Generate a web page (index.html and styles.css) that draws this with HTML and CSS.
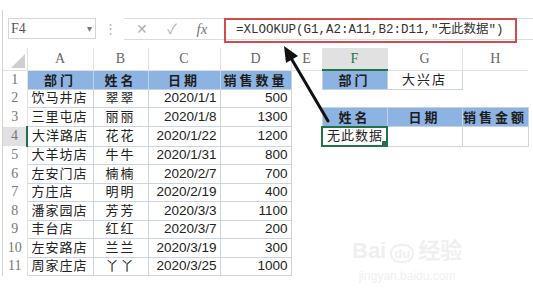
FILE: index.html
```html
<!DOCTYPE html>
<html lang="zh">
<head>
  <meta charset="UTF-8" />
  <title>XLOOKUP</title>
  <link rel="stylesheet" href="styles.css">
</head>
<body>
  <div class="app">
    <div class="fbar">
      <div class="namebox"><span>F4</span><span class="drop">&#9662;</span></div>
      <div class="grip">&#8942;</div>
      <div class="fbox">
        <span class="btn">&#10005;</span>
        <span class="btn">&#10003;</span>
        <span class="btn fx">fx</span>
        <div class="formula">=XLOOKUP(G1,A2:A11,B2:D11,"无此数据")</div>
      </div>
    </div>

    <table class="sheet">
      <colgroup>
        <col class="c-rh"><col class="c-a"><col class="c-b"><col class="c-c"><col class="c-d">
        <col class="c-e"><col class="c-f"><col class="c-g"><col class="c-h">
      </colgroup>
      <tr class="colhead">
        <th class="corner"><span class="tri"></span></th>
        <th>A</th><th>B</th><th>C</th><th>D</th><th>E</th><th class="sel">F</th><th>G</th><th>H</th>
      </tr>
      <tr>
        <td class="rh">1</td>
        <td class="hd">部门</td><td class="hd">姓名</td><td class="hd">日期</td><td class="hd">销售数量</td>
        <td></td><td class="hd">部门</td><td class="bx ctr">大兴店</td><td></td>
      </tr>
      <tr>
        <td class="rh">2</td>
        <td class="bx">饮马井店</td><td class="bx ctr">翠翠</td><td class="bx num">2020/1/1</td><td class="bx num">500</td>
        <td></td><td></td><td></td><td></td>
      </tr>
      <tr>
        <td class="rh">3</td>
        <td class="bx">三里屯店</td><td class="bx ctr">丽丽</td><td class="bx num">2020/1/8</td><td class="bx num">1300</td>
        <td></td><td class="hd">姓名</td><td class="hd">日期</td><td class="hd">销售金额</td>
      </tr>
      <tr>
        <td class="rh rsel">4</td>
        <td class="bx">大洋路店</td><td class="bx ctr">花花</td><td class="bx num">2020/1/22</td><td class="bx num">1200</td>
        <td></td><td class="bx ctr active">无此数据<span class="handle"></span></td><td class="bx"></td><td class="bx"></td>
      </tr>
      <tr>
        <td class="rh">5</td>
        <td class="bx">大羊坊店</td><td class="bx ctr">牛牛</td><td class="bx num">2020/1/31</td><td class="bx num">800</td>
        <td></td><td></td><td></td><td></td>
      </tr>
      <tr>
        <td class="rh">6</td>
        <td class="bx">左安门店</td><td class="bx ctr">楠楠</td><td class="bx num">2020/2/7</td><td class="bx num">700</td>
        <td></td><td></td><td></td><td></td>
      </tr>
      <tr>
        <td class="rh">7</td>
        <td class="bx">方庄店</td><td class="bx ctr">明明</td><td class="bx num">2020/2/19</td><td class="bx num">400</td>
        <td></td><td></td><td></td><td></td>
      </tr>
      <tr>
        <td class="rh">8</td>
        <td class="bx">潘家园店</td><td class="bx ctr">芳芳</td><td class="bx num">2020/3/3</td><td class="bx num">1100</td>
        <td></td><td></td><td></td><td></td>
      </tr>
      <tr>
        <td class="rh">9</td>
        <td class="bx">丰台店</td><td class="bx ctr">红红</td><td class="bx num">2020/3/7</td><td class="bx num">200</td>
        <td></td><td></td><td></td><td></td>
      </tr>
      <tr>
        <td class="rh">10</td>
        <td class="bx">左安路店</td><td class="bx ctr">兰兰</td><td class="bx num">2020/3/19</td><td class="bx num">300</td>
        <td></td><td></td><td></td><td></td>
      </tr>
      <tr>
        <td class="rh">11</td>
        <td class="bx">周家庄店</td><td class="bx ctr">丫丫</td><td class="bx num">2020/3/25</td><td class="bx num">1000</td>
        <td></td><td></td><td></td><td></td>
      </tr>
    </table>
  </div>

  <svg class="arrow" width="533" height="294" viewBox="0 0 533 294">
    <line x1="328" y1="121" x2="291" y2="58" stroke="#111" stroke-width="3" stroke-linecap="round" />
    <polygon points="284,46 298,56 286,63" fill="#111" />
  </svg>

  <div class="watermark">
    <div class="wm-logo">Bai<span class="paw">du</span>经验</div>
    <div class="wm-url">jingyan.baidu.com</div>
  </div>
</body>
</html>
```

FILE: styles.css
```css
body { margin: 0; background: #fff; color: #222; font-family: "Liberation Sans", "Noto Sans CJK SC", sans-serif; }
.app { margin: 10px 0 0 2px; padding-top: 8px; border-left: 1px solid #d3d3d3; width: 531px; box-sizing: border-box; }

/* formula bar */
.fbar { display: flex; align-items: flex-start; height: 30px; margin-left: 5px; }
.namebox { width: 88px; height: 21px; box-sizing: border-box; border: 1px solid #d6d6d6; display: flex; align-items: center; justify-content: space-between; padding: 0 3px 0 2px; font-family: "Liberation Serif", serif; font-size: 14px; color: #555; }
.drop { font-size: 10px; color: #777; }
.grip { width: 28px; height: 21px; text-align: center; color: #b5b5b5; font-size: 13px; line-height: 21px; }
.fbox { flex: 1; display: flex; align-items: flex-start; height: 22px; box-sizing: border-box; border-top: 1px solid #dcdcdc; border-bottom: 1px solid #dcdcdc; padding-left: 3px; }
.btn { width: 30px; height: 20px; text-align: center; line-height: 20px; color: #b0b0b0; font-size: 14px; }
.btn.fx { color: #777; font-family: "Liberation Serif", serif; font-style: italic; font-size: 15px; }
.formula { margin: -1px 0 0 7px; width: 293px; height: 25px; box-sizing: border-box; border: 2px solid #d24c4c; padding: 0 0 0 10px; line-height: 21px; font-family: "Liberation Mono", "Noto Sans CJK SC", monospace; font-size: 12.5px; color: #333; white-space: nowrap; }

/* grid */
.sheet { border-collapse: collapse; table-layout: fixed; width: 525px; }
.c-rh { width: 24px; } .c-a { width: 66px; } .c-b { width: 55px; } .c-c { width: 72px; } .c-d { width: 71px; }
.c-e { width: 31px; } .c-f { width: 65px; } .c-g { width: 75px; } .c-h { width: 66px; }
.sheet th, .sheet td { padding: 0; height: 17.5px; line-height: 16px; font-size: 13px; white-space: nowrap; overflow: hidden; }
.colhead th { height: 21px; font-family: "Liberation Serif", serif; font-weight: normal; font-size: 14px; color: #666; border-left: 1px solid #e2e2e2; border-bottom: 1px solid #e2e2e2; }
.colhead th.corner { border-left: none; position: relative; }
.tri { position: absolute; right: 2px; bottom: 2px; width: 0; height: 0; border-left: 14px solid transparent; border-bottom: 14px solid #cfcfcf; }
.colhead th.sel { background: #e1e1e1; color: #217346; border-bottom: 2px solid #217346; }
.rh { text-align: center; font-family: "Liberation Serif", serif; font-size: 14px !important; color: #777; border-right: 1px solid #e2e2e2; }
.rh.rsel { background: #e1e1e1; border-right: 2px solid #217346; }

.hd { background: #8db3e2; border: 1px solid #c3d3e6; text-align: center; font-family: "Noto Sans CJK SC", sans-serif; font-weight: bold; letter-spacing: 3px; color: #1d1d1d; }
.bx { border: 1px solid #cbd5df; padding: 0 4px !important; font-family: "Liberation Sans", "Noto Sans CJK SC", sans-serif; letter-spacing: 1px; }
.bx.ctr { text-align: center; letter-spacing: 2px; }
.bx.num { text-align: right; letter-spacing: 0; padding: 0 3px !important; font-size: 13.5px; }
.active { position: relative; border: 2px solid #217346 !important; letter-spacing: 1px !important; }
.handle { position: absolute; right: -2px; bottom: -2px; width: 5px; height: 5px; background: #217346; border: 1px solid #fff; }

/* overlays */
.arrow { position: absolute; left: 0; top: 0; pointer-events: none; }
.watermark { position: absolute; left: 352px; top: 238px; color: #efefef; text-align: center; }
.wm-logo { font-family: "Liberation Sans", "Noto Sans CJK SC", sans-serif; font-size: 22px; font-weight: bold; line-height: 26px; }
.paw { font-size: 13px; border: 2px solid #efefef; border-radius: 10px; padding: 0 2px; margin: 0 4px; }
.wm-url { font-size: 12px; margin-top: 2px; }
```
